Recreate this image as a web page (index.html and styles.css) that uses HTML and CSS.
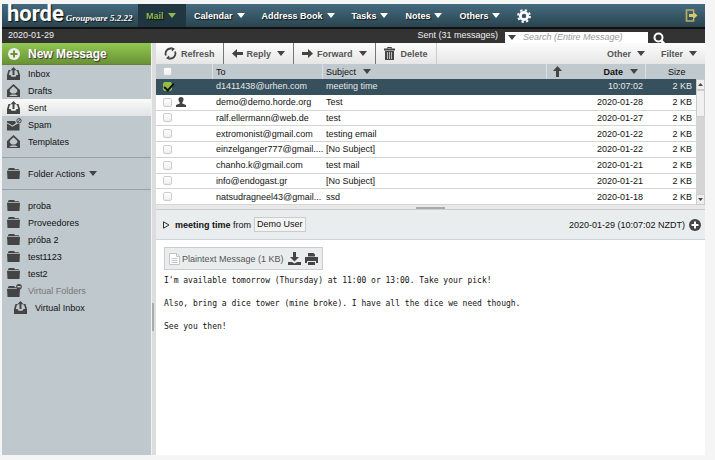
FILE: index.html
```html
<!DOCTYPE html>
<html lang="en">
<head>
<meta charset="utf-8">
<title>Horde Mail</title>
<link rel="stylesheet" href="styles.css">
</head>
<body>
<svg class="defs" aria-hidden="true">
  <symbol id="tray" viewBox="0 0 13 13"><path d="M1.500 3h2v1.200h-.7L1.800 8h1.700l1 1.800h4l1-1.800h1.700l-1-3.800h-.7V3h2L13 8v5H0V8z"/><path d="M6.500 0l3 3.300H7.500V8h-2V3.300h-2z"/></symbol>
  <symbol id="draft" viewBox="0 0 13 13"><path fill-rule="evenodd" d="M6.500 0L13 6v7H0V6zM6.500 2.300L2.800 5.800v2l2 1.700h3.400l2-1.700v-2zM2 12h9L8.500 10.500h-4z"/></symbol>
  <symbol id="spam" viewBox="0 0 15 13"><path d="M0 3h8l1 2-3.500 2.500L0 4.500zM0 5.500l5.500 3.200L11 5.500l1.500.5v6.500H0z"/><circle cx="12" cy="2.800" r="2.200" fill="none" stroke="#444"/><path d="M10.500 4.500l3-3.500" stroke="#444"/></symbol>
  <symbol id="folder" viewBox="0 0 13 11"><path d="M1 1.200L2 0h5l1 1.200h4V2H1zM0 2.700h13L12.500 11H.5z"/></symbol>
  <symbol id="vfolder" viewBox="0 0 15 13"><path d="M1 3.200L2 2h5l1 1.200h2V4H1zM0 4.700h13L12.500 13H.5z"/><circle cx="12" cy="2.800" r="2.800"/><path d="M10.300 2.800h3.400" stroke="#fff"/></symbol>
  <symbol id="down" viewBox="0 0 8 5"><path d="M0 0h8L4 5z"/></symbol>
  <symbol id="arrow" viewBox="0 0 11 9"><path d="M11 4.500L6 0v3H0v3h6v3z"/></symbol>
</svg>
<div class="app">
  <header class="topbar">
    <div class="brand"><span class="logo">horde</span><span class="version">Groupware 5.2.22</span></div>
    <nav class="menu">
      <a class="active" href="#">Mail <svg class="caret"><use href="#down"/></svg></a>
      <a href="#">Calendar <svg class="caret"><use href="#down"/></svg></a>
      <a href="#">Address Book <svg class="caret"><use href="#down"/></svg></a>
      <a href="#">Tasks <svg class="caret"><use href="#down"/></svg></a>
      <a href="#">Notes <svg class="caret"><use href="#down"/></svg></a>
      <a href="#">Others <svg class="caret"><use href="#down"/></svg></a>
      <a href="#" aria-label="Settings"><svg class="gear" viewBox="0 0 14 14"><circle cx="7" cy="7" r="3.700" fill="none" stroke="#fff" stroke-width="2.800"/><circle cx="7" cy="7" r="5.900" fill="none" stroke="#fff" stroke-width="2" stroke-dasharray="2.320 2.320"/></svg></a>
    </nav>
    <a class="logout" href="#" aria-label="Log out"><svg viewBox="0 0 13 13"><path d="M8.500 3V1h-7v11h7v-2" fill="none" stroke="#b9ad62" stroke-width="1.700"/><path fill="#d5c76c" d="M4 5h4V2.500L12.500 6.500 8 10.500V8H4z"/></svg></a>
  </header>
  <div class="subbar">
    <span class="today">2020-01-29</span>
    <span class="count">Sent (31 messages)</span>
    <label class="search"><svg class="caret"><use href="#down"/></svg><input type="text" aria-label="Search" placeholder="Search (Entire Message)"></label>
    <button class="find" aria-label="Search"><svg viewBox="0 0 12 12"><circle cx="5.500" cy="5.500" r="4" fill="none" stroke="#fff" stroke-width="2"/><path d="M8 8.500l3 3" stroke="#fff" stroke-width="2.500"/></svg></button>
  </div>
  <div class="body">
    <aside class="side">
      <button class="new"><svg viewBox="0 0 12 12"><circle cx="6" cy="6" r="6" fill="#eee"/><path d="M6 2.500v7M2.500 6h7" stroke="#6d9434" stroke-width="2"/></svg>New Message</button>
      <nav class="folders">
        <a href="#"><svg><use href="#tray"/></svg>Inbox</a>
        <a href="#"><svg><use href="#draft"/></svg>Drafts</a>
        <a class="current" href="#"><svg><use href="#tray"/></svg>Sent</a>
        <a href="#"><svg class="wide"><use href="#spam"/></svg>Spam</a>
        <a href="#"><svg><use href="#draft"/></svg>Templates</a>
      </nav>
      <div class="folders actions"><a href="#"><svg class="fold"><use href="#folder"/></svg>Folder Actions <svg class="caret"><use href="#down"/></svg></a></div>
      <nav class="folders own">
        <a href="#"><svg class="fold"><use href="#folder"/></svg>proba</a>
        <a href="#"><svg class="fold"><use href="#folder"/></svg>Proveedores</a>
        <a href="#"><svg class="fold"><use href="#folder"/></svg>próba 2</a>
        <a href="#"><svg class="fold"><use href="#folder"/></svg>test1123</a>
        <a href="#"><svg class="fold"><use href="#folder"/></svg>test2</a>
        <a class="muted" href="#"><svg class="wide"><use href="#vfolder"/></svg>Virtual Folders</a>
        <a class="nested" href="#"><svg><use href="#tray"/></svg>Virtual Inbox</a>
      </nav>
    </aside>
    <div class="splitter"><span></span></div>
    <main class="main">
      <div class="toolbar">
        <button><svg class="refresh" viewBox="0 0 13 13"><path d="M2 8.500A5 5 0 0 1 7.500 1.600M11 4.500A5 5 0 0 1 5.500 11.400" fill="none" stroke="#444" stroke-width="1.800"/><path d="M7 0l4 1.800L8 4.500zM6 13l-4-1.800L5 8.500z"/></svg>Refresh</button>
        <button><svg class="arrow flip"><use href="#arrow"/></svg>Reply <svg class="caret"><use href="#down"/></svg></button>
        <button><svg class="arrow"><use href="#arrow"/></svg>Forward <svg class="caret"><use href="#down"/></svg></button>
        <button class="delete"><svg class="trash" viewBox="0 0 11 13"><path d="M3.500 1.500V.5h4v1" fill="none" stroke="#444"/><path d="M0 1.500h11v2H0zM1 4h9v9H1z"/><path d="M3.500 5v7M5.500 5v7M7.500 5v7" stroke="#bbb"/></svg>Delete</button>
        <button class="plain first">Other <svg class="caret"><use href="#down"/></svg></button>
        <button class="plain">Filter <svg class="caret"><use href="#down"/></svg></button>
      </div>
      <div class="list">
        <table>
          <colgroup><col class="c-check"><col class="c-flag"><col class="c-to"><col><col class="c-date"><col class="c-size"></colgroup>
          <thead><tr><th><input type="checkbox" aria-label="Select all"></th><th></th><th class="sep">To</th><th class="sep">Subject <svg class="caret"><use href="#down"/></svg></th><th class="sep datehead"><div><svg class="up" viewBox="0 0 9 11"><path d="M4.500 0L9 5H6v6H3V5H0z"/></svg><b>Date</b><svg class="caret"><use href="#down"/></svg></div></th><th class="sep sizehead">Size</th></tr></thead>
          <tbody>
            <tr class="selected"><td><input type="checkbox" checked aria-label="Select message"></td><td></td><td>d1411438@urhen.com</td><td>meeting time</td><td>10:07:02</td><td>2 KB</td></tr>
            <tr><td><input type="checkbox" aria-label="Select message"></td><td><svg class="person" viewBox="0 0 10 10"><path d="M5 0c3.500 0 2.800 4 1.300 5.500v1L10 8v2H0V8l3.700-1.500v-1C2.200 4 1.500 0 5 0z"/></svg></td><td>demo@demo.horde.org</td><td>Test</td><td>2020-01-28</td><td>2 KB</td></tr>
            <tr><td><input type="checkbox" aria-label="Select message"></td><td></td><td>ralf.ellermann@web.de</td><td>test</td><td>2020-01-27</td><td>2 KB</td></tr>
            <tr><td><input type="checkbox" aria-label="Select message"></td><td></td><td>extromonist@gmail.com</td><td>testing email</td><td>2020-01-22</td><td>2 KB</td></tr>
            <tr><td><input type="checkbox" aria-label="Select message"></td><td></td><td>einzelganger777@gmail....</td><td>[No Subject]</td><td>2020-01-22</td><td>2 KB</td></tr>
            <tr><td><input type="checkbox" aria-label="Select message"></td><td></td><td>chanho.k@gmail.com</td><td>test mail</td><td>2020-01-21</td><td>2 KB</td></tr>
            <tr><td><input type="checkbox" aria-label="Select message"></td><td></td><td>info@endogast.gr</td><td>[No Subject]</td><td>2020-01-21</td><td>2 KB</td></tr>
            <tr><td><input type="checkbox" aria-label="Select message"></td><td></td><td>natsudragneel43@gmail...</td><td>ssd</td><td>2020-01-18</td><td>2 KB</td></tr>
          </tbody>
        </table>
        <div class="scroll"><i><svg class="flipv" viewBox="0 0 8 5"><use href="#down"/></svg></i><b></b><i class="end"><svg viewBox="0 0 8 5"><use href="#down"/></svg></i></div>
      </div>
      <div class="hsplit"><span></span></div>
      <div class="msghead">
        <svg class="expand" viewBox="0 0 7 8"><path d="M.5.8L6 4 .5 7.200z" fill="none" stroke="#333"/></svg>
        <span class="from"><b>meeting time</b> from</span><a class="chip" href="#">Demo User</a>
        <time>2020-01-29 (10:07:02 NZDT)</time>
        <svg class="plus" viewBox="0 0 12 12"><circle cx="6" cy="6" r="6"/><path d="M6 2.500v7M2.500 6h7" stroke="#fff" stroke-width="2"/></svg>
      </div>
      <article class="message">
        <div class="part">
          <svg class="doc" viewBox="0 0 11 12"><path d="M.5.5h7l3 3v8H.5z" fill="#fff" stroke="#c4c4c4"/><path d="M7.500.5v3h3M2.500 5.500h6M2.500 7.500h6M2.500 9.500h6" stroke="#c4c4c4" fill="none"/></svg>
          <span>Plaintext Message (1 KB)</span>
          <svg class="tool" viewBox="0 0 13 13"><path d="M5 0h3v5h3L6.500 9.500 2 5h3zM0 10h4l2.500 1.500L9 10h4v3H0z"/></svg>
          <svg class="tool" viewBox="0 0 13 13"><path d="M3 1h5.500L10 2.500V4.500H3zM0 5h13v6h-2V9H2v2H0zM3 10h7v3H3z"/></svg>
        </div>
        <p>I'm available tomorrow (Thursday) at 11:00 or 13:00. Take your pick!</p>
        <p>Also, bring a dice tower (mine broke). I have all the dice we need though.</p>
        <p>See you then!</p>
      </article>
    </main>
  </div>
</div>
</body>
</html>
```
FILE: styles.css
```css
* { box-sizing: border-box; }
body { margin: 0; background: #f5f5f5; font: 9px/16px "Liberation Sans", Arial, sans-serif; color: #111; }
a { color: inherit; text-decoration: none; }
button { font: inherit; color: inherit; border: 0; margin: 0; padding: 0; background: none; }
svg { fill: #444; flex: none; display: block; }
.defs { position: absolute; width: 0; height: 0; }
.caret { display: inline-block; width: 8px; height: 5px; margin-left: 4px; vertical-align: 1px; }
.app { display: flex; flex-direction: column; min-height: 100vh; padding: 4px 10px 5px 2px; }

.topbar { display: flex; align-items: center; height: 25px; background: linear-gradient(#456b7f, #29444f); border-bottom: 2px solid #111; color: #fff; }
.brand { display: flex; align-items: baseline; width: 136px; padding-left: 5px; text-shadow: 1px 1px 1px #111; }
.logo { font: bold 22px/22px Roboto, sans-serif; }
.version { font: italic bold 9px/22px "Liberation Serif", serif; margin-left: 2px; white-space: nowrap; }
.menu { display: flex; height: 23px; font-weight: bold; text-shadow: 1px 1px 1px #111; }
.menu a { display: flex; align-items: center; padding: 0 9px 0 8px; white-space: nowrap; }
.menu .caret { fill: #fff; }
.menu .active { width: 48px; background: #203640; color: #90b84e; }
.menu .active .caret { fill: #90b84e; }
.menu .gear { width: 14px; height: 14px; }
.logout { margin-left: auto; padding-right: 7px; }
.logout svg { width: 13px; height: 13px; }

.subbar { display: flex; height: 14px; line-height: 13px; background: #333; color: #eee; overflow: hidden; }
.today { margin-left: 6px; }
.count { margin-left: auto; margin-right: 7px; }
.search { display: flex; align-items: center; width: 143px; height: 11px; margin-top: 3px; padding-left: 3px; background: #fff; }
.search .caret { width: 8px; margin: 0; }
.search input { flex: 1; min-width: 0; height: 11px; margin-left: 7px; padding: 0; border: 0; outline: 0; background: none; font: italic 9px/11px "Liberation Sans", sans-serif; }
.search input::placeholder { color: #999; }
.find { width: 57px; height: 12px; padding: 3px 0 0 5px; }
.find svg { width: 12px; height: 12px; }

.body { display: flex; flex: 1; }
.side { width: 149px; background: #bfc8cd; }
.new { display: flex; align-items: center; gap: 8px; width: 100%; height: 22px; padding-left: 6px; background: linear-gradient(#91c851, #6a9236); border-bottom: 1px solid #66823f; color: #fff; font-size: 12px; font-weight: bold; text-shadow: 1px 1px 1px #333; }
.new svg { width: 12px; height: 12px; }
.folders a { display: flex; align-items: center; height: 17px; padding-left: 5px; }
.folders svg { width: 13px; height: 13px; margin-right: 8px; }
.folders .fold { height: 11px; }
.folders .wide { width: 15px; margin-right: 6px; }
.folders .caret { width: 8px; height: 5px; margin: 0 0 0 4px; }
.folders .current { background: linear-gradient(#fafafa, #e2e4e5); }
.folders .muted { color: #777; }
.folders .nested { padding-left: 12px; }
.actions { margin-top: 7px; padding: 7px 0; border: solid #98a2a7; border-width: 1px 0; }
.own { padding-top: 7px; }
.splitter { display: flex; width: 5px; border-left: 1px solid #f1f1f1; background: #ddd; align-items: center; }
.splitter span { width: 2px; height: 28px; margin-bottom: -136px; background: #a7adaf; }

.main { display: flex; flex: 1; min-width: 0; flex-direction: column; background: #fff; }
.toolbar { display: flex; height: 21px; background: linear-gradient(#fcfcfc, #e6e6e6); font-weight: bold; color: #555; }
.toolbar button { display: flex; align-items: center; padding: 0 8px; border-right: 1px solid #777; }
.toolbar .caret { margin-left: 6px; }
.toolbar .delete { border-color: #ccc; }
.toolbar .plain { border: 0; }
.toolbar .first { margin-left: auto; }
.refresh { width: 13px; height: 13px; margin-right: 4px; }
.arrow { width: 11px; height: 9px; margin-right: 4px; }
.flip { transform: scaleX(-1); }
.trash { width: 11px; height: 13px; margin-right: 6px; }

.list { position: relative; }
table { width: 100%; height: 141px; table-layout: fixed; border-collapse: separate; border-spacing: 0; line-height: 12px; }
.c-check { width: 20px; }
.c-flag { width: 36px; }
.c-to { width: 110px; }
.c-date { width: 99px; }
.c-size { width: 60px; }
th, td { padding: 0; text-align: left; vertical-align: middle; white-space: nowrap; font-weight: normal; }
th { height: 15px; background: #c0c9ce; }
td { border-bottom: 1px solid #d5d5d5; }
th.sep { padding-left: 3px; border-left: 1px solid #dbe0e3; }
td:nth-child(n+3) { padding-left: 4px; }
td:nth-child(5), td:nth-child(6) { text-align: right; }
td:nth-child(5) { padding-right: 2px; }
td:nth-child(6) { padding-right: 13px; }
th.sizehead { padding-left: 22px; }
.datehead div { display: flex; align-items: center; }
.datehead b { margin-left: auto; }
.datehead .caret { margin: 0 7px; }
.up { width: 9px; height: 11px; margin-left: 3px; }
.person { width: 10px; height: 10px; }
.selected td { background: #36505d; border-color: #36505d; color: #e8e8e8; }
input[type=checkbox] { appearance: none; display: block; width: 9px; height: 9px; margin: 0 0 0 7px; border: 1px solid #ccc; border-radius: 2px; background: linear-gradient(#fff, #eee); }
input:checked[type=checkbox] { border-color: #92bd47; background: #92bd47; }
input:checked::after { content: ""; display: block; width: 8px; height: 4px; border: solid #111; border-width: 0 0 2px 2px; transform: rotate(-48deg); }
.scroll { position: absolute; top: 15px; right: 0; bottom: 0; width: 9px; background: #d5d5d5; display: flex; flex-direction: column; }
.scroll i { display: flex; align-items: center; justify-content: center; height: 11px; background: #eee; border: 1px solid #ccc; }
.scroll svg { width: 5px; height: 3px; }
.scroll b { height: 27px; background: #f0f0f0; border: 1px solid #ccc; }
.scroll .end { margin-top: auto; }
.flipv { transform: scaleY(-1); }
.hsplit { height: 5px; padding-top: 2px; background: #e8e8e8; border-bottom: 1px solid #ccc; }
.hsplit span { display: block; width: 29px; height: 2px; margin: 0 auto; background: #aaa; }

.msghead { display: flex; align-items: center; height: 30px; padding: 0 4px 0 7px; background: #e9edee; border-bottom: 1px solid #ccd5d5; }
.expand { width: 7px; height: 8px; margin-right: 5px; }
.chip { margin-left: 3px; padding: 0 2px; line-height: 13px; border: 1px solid #ccc; background: #f4f4f4; }
.msghead time { margin-left: auto; }
.plus { width: 12px; height: 12px; margin-left: 4px; }
.message { padding: 7px 8px; font: 8px/12px "DejaVu Sans Mono", monospace; }
.message p { margin: 0 0 11px; }
.part { display: flex; align-items: center; width: max-content; height: 23px; margin-bottom: 5px; padding: 0 4px; background: #e9edee; border: 1px solid #ccc; font: 9px/16px "Liberation Sans", sans-serif; color: #555; }
.doc { width: 11px; height: 12px; margin-right: 2px; }
.tool { width: 13px; height: 13px; margin-left: 4px; }
```
